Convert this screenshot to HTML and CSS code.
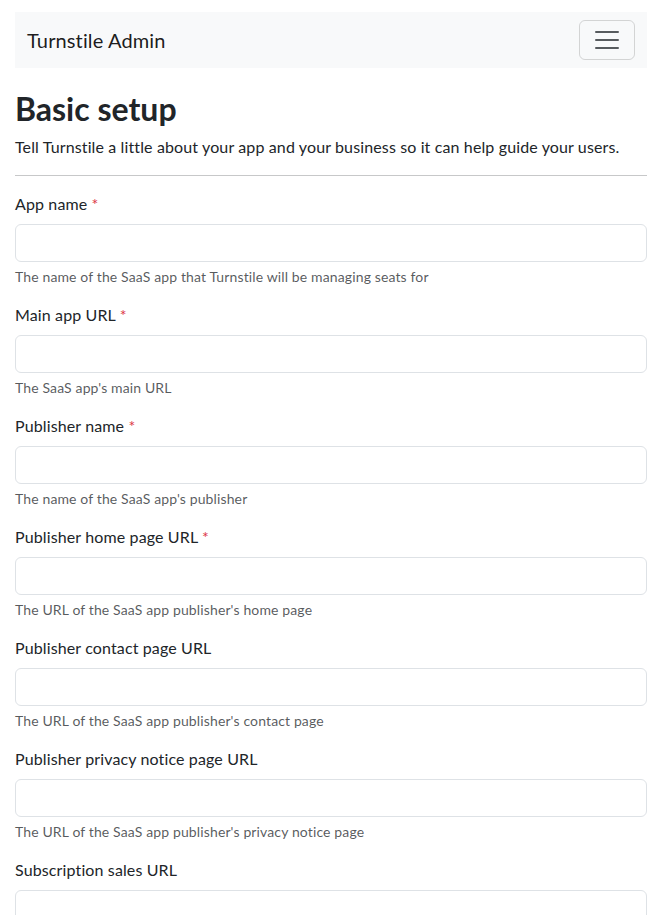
FILE: index.html
```html
<!DOCTYPE html>
<html lang="en">
<head>
<meta charset="utf-8">
<title>Turnstile Admin - Basic setup</title>
<link rel="stylesheet" href="styles.css">
</head>
<body>
<div class="page">
  <nav class="navbar">
    <span class="brand">Turnstile Admin</span>
    <button class="toggler" type="button" aria-label="Toggle navigation">
      <svg class="toggler-icon" viewBox="0 0 30 30" width="30" height="30" aria-hidden="true">
        <path d="M4 7h22M4 15h22M4 23h22" stroke="rgba(33,37,41,0.75)" stroke-width="2" stroke-linecap="round" stroke-miterlimit="10" fill="none"/>
      </svg>
    </button>
  </nav>

  <h1 class="title">Basic setup</h1>
  <p class="lead-text">Tell Turnstile a little about your app and your business so it can help guide your users.</p>
  <hr class="divider">

  <form class="form">
    <div class="field">
      <label class="label" for="appName">App name <span class="req">*</span></label>
      <input class="input" id="appName" type="text">
      <div class="help">The name of the SaaS app that Turnstile will be managing seats for</div>
    </div>
    <div class="field">
      <label class="label" for="appUrl">Main app URL <span class="req">*</span></label>
      <input class="input" id="appUrl" type="text">
      <div class="help">The SaaS app's main URL</div>
    </div>
    <div class="field">
      <label class="label" for="pubName">Publisher name <span class="req">*</span></label>
      <input class="input" id="pubName" type="text">
      <div class="help">The name of the SaaS app's publisher</div>
    </div>
    <div class="field">
      <label class="label" for="pubHome">Publisher home page URL <span class="req">*</span></label>
      <input class="input" id="pubHome" type="text">
      <div class="help">The URL of the SaaS app publisher's home page</div>
    </div>
    <div class="field">
      <label class="label" for="pubContact">Publisher contact page URL</label>
      <input class="input" id="pubContact" type="text">
      <div class="help">The URL of the SaaS app publisher's contact page</div>
    </div>
    <div class="field">
      <label class="label" for="pubPrivacy">Publisher privacy notice page URL</label>
      <input class="input" id="pubPrivacy" type="text">
      <div class="help">The URL of the SaaS app publisher's privacy notice page</div>
    </div>
    <div class="field">
      <label class="label" for="salesUrl">Subscription sales URL</label>
      <input class="input" id="salesUrl" type="text">
      <div class="help">The URL where customers can purchase subscriptions</div>
    </div>
  </form>
</div>
</body>
</html>
```

FILE: styles.css
```css
html, body {
  margin: 0;
  padding: 0;
  background: #fff;
}

body {
  font-family: Lato, "Noto Sans", "Liberation Sans", sans-serif;
  font-size: 16px;
  line-height: 1.5;
  letter-spacing: 0.008em;
  color: #212529;
}

.page {
  padding: 12px 10px 40px 15px;
}

.navbar {
  display: flex;
  align-items: center;
  justify-content: space-between;
  height: 56px;
  box-sizing: border-box;
  padding: 8px 12px;
  background: #f8f9fa;
}

.brand {
  font-size: 20px;
  line-height: 30px;
  color: rgba(0, 0, 0, 0.9);
  padding: 5px 0;
}

.toggler {
  display: flex;
  align-items: center;
  justify-content: center;
  width: 56px;
  height: 40px;
  box-sizing: border-box;
  padding: 4px 12px;
  background: transparent;
  border: 1px solid rgba(0, 0, 0, 0.15);
  border-radius: 6px;
}

.toggler-icon {
  display: block;
  width: 30px;
  height: 30px;
}

.title {
  font-size: 32px;
  line-height: 38px;
  font-weight: 700;
  letter-spacing: 0;
  margin: 22px 0 7px;
}

.lead-text {
  margin: 0 0 16px;
}

.divider {
  margin: 0 0 16px;
  border: 0;
  border-top: 1px solid #212529;
  opacity: 0.25;
}

.form {
  display: flex;
  flex-direction: column;
  gap: 16px;
}

.field {
  display: flex;
  flex-direction: column;
}

.label {
  display: block;
  margin-bottom: 8px;
}

.req {
  color: #dc3545;
}

.input {
  display: block;
  width: 100%;
  height: 38px;
  box-sizing: border-box;
  padding: 6px 12px;
  font: inherit;
  color: #212529;
  background: #fff;
  border: 1px solid #dee2e6;
  border-radius: 6px;
}

.help {
  margin-top: 4px;
  font-size: 14px;
  line-height: 21px;
  color: rgba(33, 37, 41, 0.75);
}
```
